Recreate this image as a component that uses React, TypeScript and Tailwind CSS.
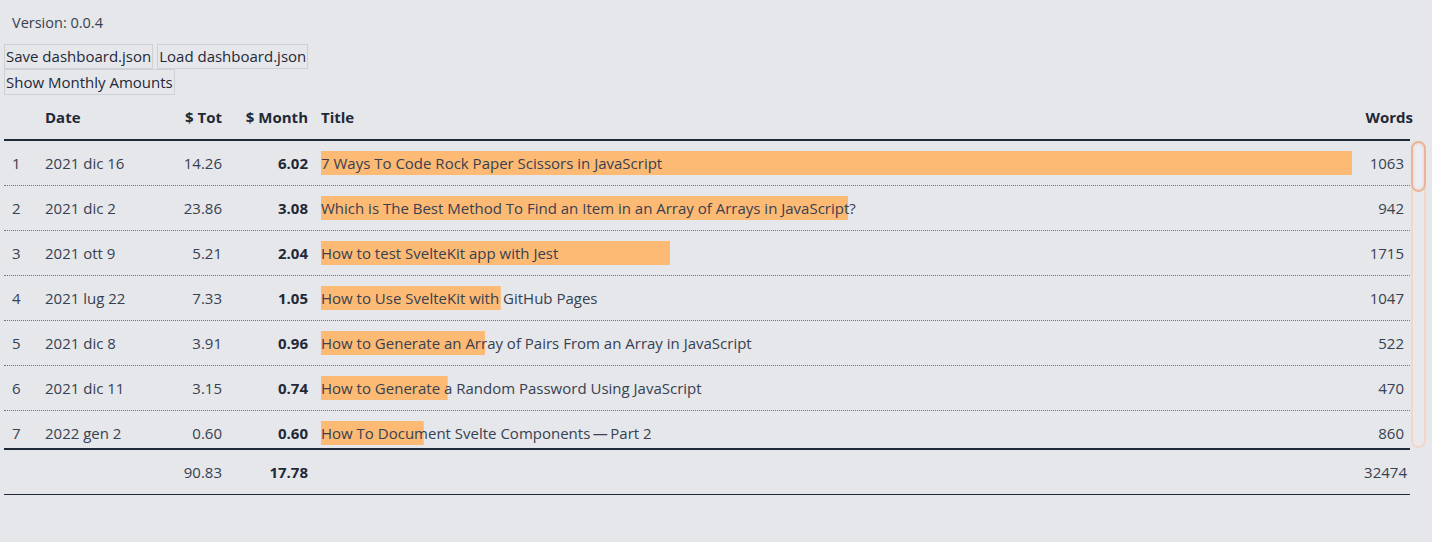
import React from "react";

type Post = {
  date: string;
  tot: number;
  month: number;
  title: string;
  words: number;
};

const posts: Post[] = [
  { date: "2021 dic 16", tot: 14.26, month: 6.02, title: "7 Ways To Code Rock Paper Scissors in JavaScript", words: 1063 },
  { date: "2021 dic 2", tot: 23.86, month: 3.08, title: "Which is The Best Method To Find an Item in an Array of Arrays in JavaScript?", words: 942 },
  { date: "2021 ott 9", tot: 5.21, month: 2.04, title: "How to test SvelteKit app with Jest", words: 1715 },
  { date: "2021 lug 22", tot: 7.33, month: 1.05, title: "How to Use SvelteKit with GitHub Pages", words: 1047 },
  { date: "2021 dic 8", tot: 3.91, month: 0.96, title: "How to Generate an Array of Pairs From an Array in JavaScript", words: 522 },
  { date: "2021 dic 11", tot: 3.15, month: 0.74, title: "How to Generate a Random Password Using JavaScript", words: 470 },
  { date: "2022 gen 2", tot: 0.6, month: 0.6, title: "How To Document Svelte Components\u2009—\u2009Part 2", words: 860 },
];

const maxMonth = 6.02;
const cols = "grid grid-cols-[33px_113px_80px_86px_1036px_58px]";

function Row({ post, index }: { post: Post; index: number }) {
  const pct = (post.month / maxMonth) * 100;
  return (
    <div className={`${cols} h-[45px] shrink-0 items-center border-b border-dotted border-gray-500 text-[15px] text-[#374151]`}>
      <div className="pl-2">{index + 1}</div>
      <div className="pl-2 whitespace-nowrap">{post.date}</div>
      <div className="pr-2 text-right">{post.tot.toFixed(2)}</div>
      <div className="pr-2 text-right font-bold text-[#1f2937]">{post.month.toFixed(2)}</div>
      <div className="pl-[5px]">
        <div
          className="h-6 leading-6 whitespace-nowrap"
          style={{
            backgroundImage: "linear-gradient(#fdba74, #fdba74)",
            backgroundRepeat: "no-repeat",
            backgroundSize: `${pct}% 100%`,
          }}
        >
          {post.title}
        </div>
      </div>
      <div className="pr-[6px] text-right">{post.words}</div>
    </div>
  );
}

export default function App() {
  return (
    <div
      className="min-h-[542px] bg-[#e5e7eb] px-1 text-[#374151]"
      style={{ fontFamily: '"Open Sans", "Noto Sans", sans-serif' }}
    >
      <div className="h-[44px] flex items-center px-2 pt-[2px] text-[14.5px]">Version: 0.0.4</div>

      <div className="flex flex-col items-start text-[15px] text-[#1f2937]">
        <div className="flex gap-1">
          <button className="h-[25px] border border-[#cdd0d5] px-px leading-none">Save dashboard.json</button>
          <button className="h-[25px] border border-[#cdd0d5] px-px leading-none">Load dashboard.json</button>
        </div>
        <button className="h-[26px] border border-[#cdd0d5] px-px leading-none">Show Monthly Amounts</button>
      </div>

      <div className="w-[1422px]">
        <div className={`${cols} w-[1406px] h-[46px] items-center border-b-2 border-[#1f2937] text-[15px] font-bold text-[#1f2937]`}>
          <div />
          <div className="pl-2">Date</div>
          <div className="pr-2 text-right">$ Tot</div>
          <div className="pr-2 text-right whitespace-nowrap">$ Month</div>
          <div className="pl-[5px]">Title</div>
          <div className="flex justify-end">
            <span className="-mr-[3px]">Words</span>
          </div>
        </div>

        <div className="flex h-[307px]">
          <div className="flex w-[1406px] flex-col overflow-hidden">
            {posts.map((p, i) => (
              <Row key={i} post={p} index={i} />
            ))}
          </div>
          {/* scrollbar */}
          <div className="ml-px w-[15px] rounded-full border-2 border-[#f2d6c8] bg-[#e9e9ec]">
            <div className="-mx-[2px] -mt-[2px] h-[51px] rounded-full border-2 border-[#ebb398] bg-[#eceef2] shadow-[inset_0_0_3px_rgba(236,170,140,0.6)]" />
          </div>
        </div>

        <div className={`${cols} w-[1406px] h-[47px] items-center border-t-2 border-b border-[#1f2937] text-[15px]`}>
          <div />
          <div />
          <div className="pr-2 text-right">90.83</div>
          <div className="pr-2 text-right font-bold text-[#1f2937]">17.78</div>
          <div />
          <div className="pr-[3px] text-right">32474</div>
        </div>
      </div>
    </div>
  );
}
